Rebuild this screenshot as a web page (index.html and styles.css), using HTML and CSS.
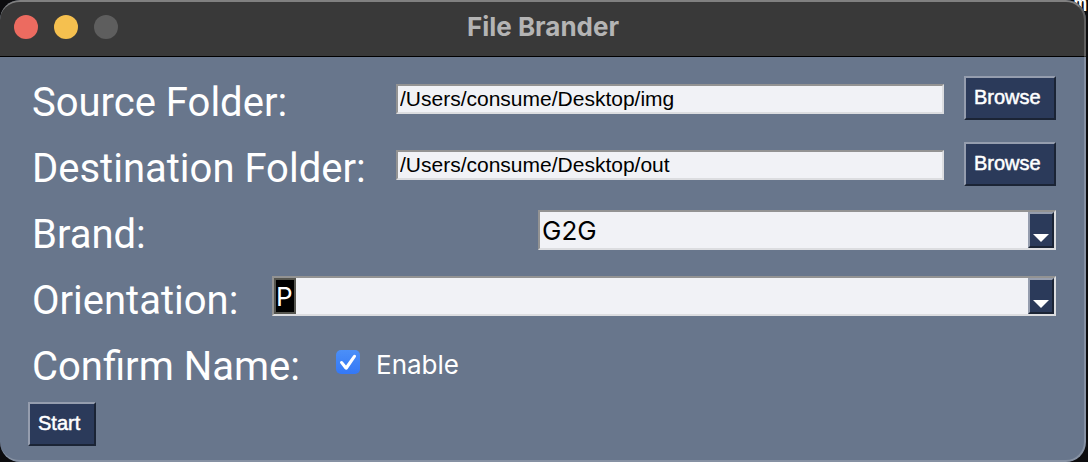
FILE: index.html
```
<!DOCTYPE html>
<html lang="en">
<head>
<meta charset="utf-8">
<title>File Brander</title>
<link rel="stylesheet" href="styles.css">
</head>
<body>
<main class="window">
  <header class="titlebar">
    <div class="lights">
      <button class="light close" type="button" aria-label="Close"></button>
      <button class="light minimize" type="button" aria-label="Minimize"></button>
      <button class="light zoom" type="button" aria-label="Zoom" disabled></button>
    </div>
    <h1 class="title">File Brander</h1>
  </header>
  <form class="form">
    <div class="row">
      <label class="label label-folder" for="source">Source Folder:</label>
      <input class="field" id="source" type="text" value="/Users/consume/Desktop/img" spellcheck="false">
      <button class="button browse" type="button">Browse</button>
    </div>
    <div class="row">
      <label class="label label-folder" for="destination">Destination Folder:</label>
      <input class="field" id="destination" type="text" value="/Users/consume/Desktop/out" spellcheck="false">
      <button class="button browse" type="button">Browse</button>
    </div>
    <div class="row">
      <label class="label label-brand" for="brand">Brand:</label>
      <div class="combo">
        <select class="select" id="brand"><option>G2G</option></select>
        <span class="arrow"><svg viewBox="0 0 16 8" width="16" height="8" aria-hidden="true"><path d="M0 0H16L8 8Z" fill="#fff"/></svg></span>
      </div>
    </div>
    <div class="row">
      <label class="label label-orientation" for="orientation">Orientation:</label>
      <div class="combo">
        <select class="select selected" id="orientation"><option>P</option></select>
        <span class="arrow"><svg viewBox="0 0 16 8" width="16" height="8" aria-hidden="true"><path d="M0 0H16L8 8Z" fill="#fff"/></svg></span>
      </div>
    </div>
    <div class="row">
      <span class="label label-confirm">Confirm Name:</span>
      <input class="check" id="confirm" type="checkbox" checked>
      <label class="check-label" for="confirm">Enable</label>
    </div>
    <button class="button start" type="button">Start</button>
  </form>
</main>
<div class="backdrop" aria-hidden="true">m</div>
</body>
</html>
```
FILE: styles.css
```
* { box-sizing: border-box; }

body {
  margin: 0;
  min-height: 100vh;
  padding: 0 2px 0 0;
  display: flex;
  background: #0c0c0e;
  font-family: Inter, "Liberation Sans", sans-serif;
  overflow: hidden;
}

.window {
  flex: 1;
  position: relative;
  z-index: 1;
  border-radius: 20px;
  overflow: hidden;
  background: #68768c;
}

.window::after {
  content: "";
  position: absolute;
  inset: 0;
  border: 2px solid rgba(255, 255, 255, 0.2);
  border-top-color: rgba(255, 255, 255, 0.36);
  border-left: 0;
  border-radius: 20px;
  pointer-events: none;
}

.backdrop {
  position: absolute;
  top: -6px;
  right: 1px;
  color: #fff;
  font: bold 22px/24px "Liberation Mono", monospace;
}

.titlebar {
  display: grid;
  grid-template-columns: 1fr auto 1fr;
  align-items: center;
  height: 57px;
  padding: 0 14px 2px;
  background: #393939;
  border-bottom: 1px solid #000;
}

.lights { display: flex; gap: 16px; }

.light {
  width: 24px;
  height: 24px;
  padding: 0;
  border: 0;
  border-radius: 50%;
}

.close { background: #ec6b60; }
.minimize { background: #f5c04f; }
.zoom { background: #5e5e5e; }

.title {
  margin: 0;
  font-size: 26px;
  line-height: 32px;
  font-weight: 700;
  color: #b4b4b4;
}

.form { padding: 8px 30px 15px 28px; }

.row {
  display: flex;
  align-items: center;
  height: 66px;
}

.label {
  flex: none;
  padding: 10px 0 0 4px;
  font-family: Roboto, sans-serif;
  font-size: 40px;
  line-height: 46px;
  color: #fff;
  white-space: nowrap;
}

.label-folder { width: 368px; }
.label-brand { width: 510px; }
.label-orientation { width: 244px; }
.label-confirm { width: 308px; }

.field {
  flex: 1;
  min-width: 0;
  height: 30px;
  margin: 2px 20px 0 0;
  padding: 0 2px;
  border: 2px solid;
  border-color: #939393 #dcdde0 #dcdde0 #939393;
  border-radius: 0;
  background: #f1f2f6;
  color: #000;
  font: 21px/24px "Liberation Sans", Arial, sans-serif;
  outline: 0;
}

.button {
  height: 44px;
  padding: 0 8px 2px;
  border: 2px solid;
  border-color: #959dae #1b2435 #1b2435 #959dae;
  border-radius: 0;
  background: #2b3a5a;
  color: #fff;
  font: 20px/24px "Liberation Sans", Arial, sans-serif;
  text-align: left;
  -webkit-text-stroke: 0.5px #fff;
}

.browse { width: 92px; }
.start { display: block; width: 68px; margin-top: 7px; }

.combo {
  flex: 1;
  display: flex;
  height: 40px;
  border: 2px solid;
  border-color: #939393 #dcdde0 #dcdde0 #939393;
  background: #f1f2f6;
}

.select {
  flex: 1;
  min-width: 0;
  appearance: none;
  padding: 2px 2px 0;
  border: 0;
  border-radius: 0;
  background: transparent;
  color: #000;
  font: 26px/32px Inter, sans-serif;
  outline: 0;
}

.selected {
  color: #fff;
  background:
    linear-gradient(#000, #000) 2px 2px / 18px 32px no-repeat,
    linear-gradient(#55554f, #55554f) 0 0 / 22px 36px no-repeat;
}

.arrow {
  display: flex;
  align-items: flex-end;
  justify-content: center;
  width: 26px;
  padding-bottom: 4px;
  border: 2px solid;
  border-color: #959dae #1b2435 #1b2435 #959dae;
  background: #2b3a5a;
}

.check {
  appearance: none;
  width: 24px;
  height: 24px;
  margin: 0 16px 0 0;
  border-radius: 5px;
  background: linear-gradient(#4b8ff8, #3478f6);
}

.check:checked::before {
  content: "";
  display: block;
  width: 24px;
  height: 24px;
  background: #fff;
  clip-path: path("M4.3 13.2C3.2 11.8 5.4 10 6.7 11.5L10 15.5L17.2 5.4C18.6 3.8 20.8 5.3 19.8 6.9L11.8 18.8C11 20 9.6 20 8.7 18.9Z");
}

.check-label {
  padding-top: 5px;
  font-size: 26px;
  line-height: 32px;
  color: #fff;
}
```
